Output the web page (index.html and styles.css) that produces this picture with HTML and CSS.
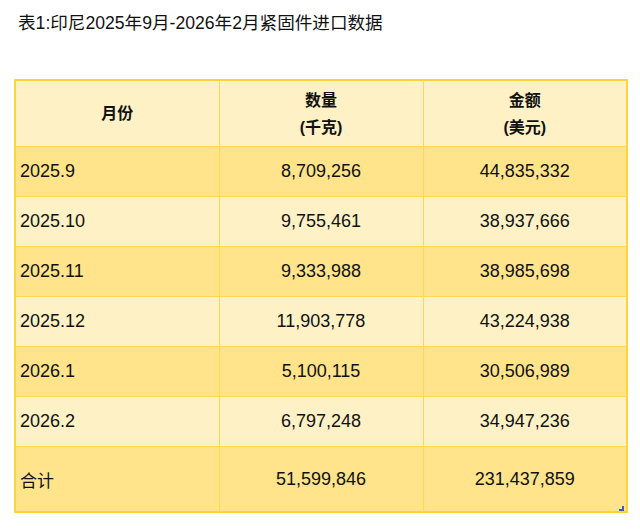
FILE: index.html
```html
<!DOCTYPE html>
<html lang="zh">
<head>
<meta charset="utf-8">
<link rel="stylesheet" href="styles.css">
</head>
<body>
<div class="page">
  <h1 class="title">表1:印尼2025年9月-2026年2月紧固件进口数据</h1>
  <div class="table-wrap">
    <table class="data">
      <colgroup>
        <col class="col">
        <col class="col">
        <col class="col">
      </colgroup>
      <thead>
        <tr>
          <th>月份</th>
          <th>数量<br>(千克)</th>
          <th>金额<br>(美元)</th>
        </tr>
      </thead>
      <tbody>
        <tr class="dark"><td class="label">2025.9</td><td>8,709,256</td><td>44,835,332</td></tr>
        <tr class="light"><td class="label">2025.10</td><td>9,755,461</td><td>38,937,666</td></tr>
        <tr class="dark"><td class="label">2025.11</td><td>9,333,988</td><td>38,985,698</td></tr>
        <tr class="light"><td class="label">2025.12</td><td>11,903,778</td><td>43,224,938</td></tr>
        <tr class="dark"><td class="label">2026.1</td><td>5,100,115</td><td>30,506,989</td></tr>
        <tr class="light"><td class="label">2026.2</td><td>6,797,248</td><td>34,947,236</td></tr>
        <tr class="dark total"><td class="label cjk">合计</td><td>51,599,846</td><td>231,437,859</td></tr>
      </tbody>
    </table>
    <span class="handle"></span>
  </div>
</div>
</body>
</html>
```
FILE: styles.css
```css
html, body {
  margin: 0;
  padding: 0;
  background: #ffffff;
}
.page {
  padding: 0 14px;
  font-family: "Liberation Sans", "Noto Sans CJK SC", sans-serif;
  color: #111111;
}
.title {
  margin: 0;
  padding: 11px 0 0 4px;
  height: 79px;
  box-sizing: border-box;
  font-size: 17.6px;
  font-weight: normal;
  line-height: 24px;
}
.table-wrap {
  position: relative;
  width: 612px;
}
.data {
  width: 612px;
  border-collapse: collapse;
  table-layout: fixed;
  border: 2px solid #ffd43a;
}
.col {
  width: 204px;
}
.data th,
.data td {
  border: 1px solid #ffd84d;
  text-align: center;
  padding: 0 4px;
}
.data th {
  height: 65px;
  background: #fff1c6;
  font-size: 16px;
  font-weight: bold;
  line-height: 27px;
}
.data td {
  height: 49px;
  font-size: 18px;
}
.data td.label {
  text-align: left;
}
.data td.cjk {
  font-size: 17px;
}
.dark td {
  background: #ffe48c;
}
.light td {
  background: #fff1c6;
}
.total td {
  height: 64px;
}
.handle {
  position: absolute;
  right: 2px;
  bottom: 2px;
  width: 5px;
  height: 5px;
  background: #3a57c9;
  clip-path: polygon(60% 0, 100% 0, 100% 100%, 0 100%, 0 60%, 60% 60%);
}
```
